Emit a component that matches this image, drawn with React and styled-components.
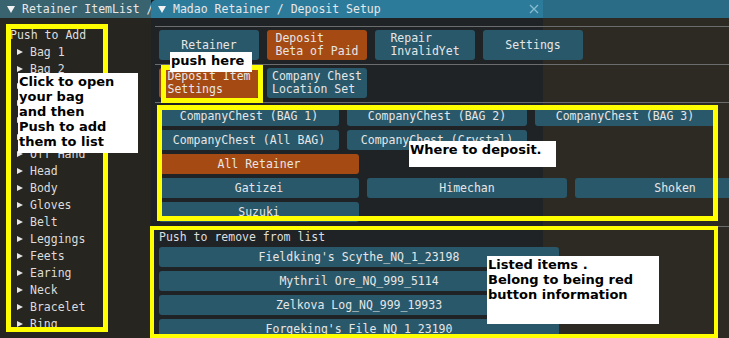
import React from "react";
import styled, { createGlobalStyle } from "styled-components";

const GlobalStyle = createGlobalStyle`
  html, body {
    margin: 0;
    padding: 0;
    background: #1b1c1c;
    overflow: hidden;
  }
`;

const leftItems = [
  "Bag 1",
  "Bag 2",
  "Bag 3",
  "Bag 4",
  "Crystals",
  "Main Hand",
  "Off Hand",
  "Head",
  "Body",
  "Gloves",
  "Belt",
  "Leggings",
  "Feets",
  "Earing",
  "Neck",
  "Bracelet",
  "Ring",
];

const listed = [
  "Fieldking's Scythe_NQ_1_23198",
  "Mythril Ore_NQ_999_5114",
  "Zelkova Log_NQ_999_19933",
  "Forgeking's File_NQ_1_23190",
];

const App = () => {
  return (
    <>
      <GlobalStyle />
      <Screen>
        <LeftWindow>
          <TitleBar $tone="inactive">
            <Collapse />
            <TitleText>Retainer ItemList /</TitleText>
          </TitleBar>
          <LeftBody>
            <Label>Push to Add</Label>
            {leftItems.map((item) => (
              <TreeNode key={item}>
                <Arrow />
                {item}
              </TreeNode>
            ))}
          </LeftBody>
        </LeftWindow>

        <MainWindow>
          <TitleBar $tone="active">
            <Collapse />
            <TitleText>Madao Retainer / Deposit Setup</TitleText>
            <Close viewBox="0 0 10 10">
              <path d="M1 1 L9 9 M9 1 L1 9" />
            </Close>
          </TitleBar>
          <MainBody>
            <Separator />
            <Row>
              <Btn $w={100} $h={30}>Retainer</Btn>
              <Btn $w={100} $h={30} $active>
                {"Deposit\nBeta of Paid"}
              </Btn>
              <Btn $w={100} $h={30}>
                {"Repair\nInvalidYet"}
              </Btn>
              <Btn $w={100} $h={30}>Settings</Btn>
            </Row>
            <Separator />
            <Row>
              <Btn $w={100} $h={30} $active>
                {"Deposit Item\nSettings"}
              </Btn>
              <Btn $w={100} $h={30}>
                {"Company Chest\nLocation Set"}
              </Btn>
            </Row>
            <Separator />
            <Row>
              <Btn $w={180}>CompanyChest (BAG 1)</Btn>
              <Btn $w={180}>CompanyChest (BAG 2)</Btn>
              <Btn $w={180}>CompanyChest (BAG 3)</Btn>
            </Row>
            <Row>
              <Btn $w={180}>CompanyChest (All BAG)</Btn>
              <Btn $w={180}>CompanyChest (Crystal)</Btn>
            </Row>
            <Row>
              <Btn $w={200} $active>
                All Retainer
              </Btn>
            </Row>
            <Row>
              <Btn $w={200}>Gatizei</Btn>
              <Btn $w={200}>Himechan</Btn>
              <Btn $w={200}>Shoken</Btn>
            </Row>
            <Row>
              <Btn $w={200}>Suzuki</Btn>
            </Row>
            <Separator />
            <Label>Push to remove from list</Label>
            {listed.map((item) => (
              <Btn key={item} $w={400}>
                {item}
              </Btn>
            ))}
          </MainBody>
        </MainWindow>

        {/* annotation overlays */}
        <Frame $x={6} $y={24} $w={102} $h={308} />
        <Frame $x={161} $y={65} $w={102} $h={38} />
        <Frame $x={157} $y={105} $w={561} $h={116} />
        <Frame $x={150} $y={226} $w={568} $h={112} $b={4} />

        <Note $x={18} $y={73} $w={120} $h={80}>
          Click to open
          <br />
          your bag
          <br />
          and then
          <br />
          Push to add
          <br />
          them to list
        </Note>
        <Note $x={170} $y={52} $w={82} $h={20}>
          push here
        </Note>
        <Note $x={409} $y={141} $w={147} $h={26}>
          Where to deposit.
        </Note>
        <Note $x={487} $y={256} $w={172} $h={68}>
          Listed items .
          <br />
          Belong to being red
          <br />
          button information
        </Note>
      </Screen>
    </>
  );
};
export default App;

const Screen = styled.div`
  position: relative;
  width: 729px;
  height: 338px;
  overflow: hidden;
  display: flex;
  font-family: "DejaVu Sans Mono", "Liberation Mono", monospace;
`;

const LeftWindow = styled.div`
  width: 151px;
  flex: none;
  display: flex;
  flex-direction: column;
  background: #27251f;
`;

const MainWindow = styled.div`
  width: 620px;
  flex: none;
  display: flex;
  flex-direction: column;
  background: linear-gradient(90deg, #1f2326 0, #1f2326 392px, #2d2a24 392px);
  border-top-left-radius: 5px;
  overflow: hidden;
`;

const TitleBar = styled.div`
  position: relative;
  height: 18px;
  flex: none;
  display: flex;
  align-items: center;
  padding-left: 7px;
  background: ${(p) =>
    p.$tone === "active"
      ? "linear-gradient(90deg, #2c7b9b 0, #2c7b9b 392px, #2a6c85 392px)"
      : "#39636f"};
  color: #e8e8e8;
  white-space: nowrap;
  overflow: hidden;
`;

const Collapse = styled.span`
  width: 0;
  height: 0;
  border-left: 4px solid transparent;
  border-right: 4px solid transparent;
  border-top: 7px solid #f2f2f2;
  margin-right: 7px;
  flex: none;
`;

const TitleText = styled.span`
  font-size: 11.5px;
  line-height: 13px;
`;

const Close = styled.svg`
  position: absolute;
  left: 378px;
  top: 4px;
  width: 10px;
  height: 10px;
  stroke: #86bccf;
  stroke-width: 1.3;
  fill: none;
`;

const LeftBody = styled.div`
  display: flex;
  flex-direction: column;
  gap: 4px;
  padding: 10px 0 0 10px;
`;

const Label = styled.div`
  height: 14px;
  font-size: 11.5px;
  line-height: 14px;
  color: #dedede;
  white-space: nowrap;
  margin-bottom: -1px;
`;

const TreeNode = styled.div`
  display: flex;
  align-items: center;
  height: 13px;
  font-size: 11.5px;
  color: #dcdcdc;
  padding-left: 7px;
  white-space: nowrap;
`;

const Arrow = styled.span`
  width: 0;
  height: 0;
  border-top: 3.5px solid transparent;
  border-bottom: 3.5px solid transparent;
  border-left: 6px solid #e6e6e6;
  margin-right: 7px;
`;

const MainBody = styled.div`
  display: flex;
  flex-direction: column;
  gap: 4px;
  padding: 8px 8px 0 8px;
`;

const Separator = styled.div`
  height: 0;
  border-top: 1px solid #6a6c6e;
  margin: 0 -4px -1px -4px;
`;

const Row = styled.div`
  display: flex;
  gap: 8px;
`;

const Btn = styled.button`
  width: ${(p) => p.$w}px;
  height: ${(p) => p.$h || 20}px;
  flex: none;
  padding: 0;
  border: 0;
  border-radius: 3px;
  background: ${(p) => (p.$active ? "#a64a14" : "#29586a")};
  color: #e6e6e6;
  font-family: "DejaVu Sans Mono", "Liberation Mono", monospace;
  font-size: 11.5px;
  line-height: 13px;
  display: flex;
  align-items: center;
  justify-content: center;
  white-space: pre;
  text-align: left;
`;

const Frame = styled.div`
  position: absolute;
  left: ${(p) => p.$x}px;
  top: ${(p) => p.$y}px;
  width: ${(p) => p.$w}px;
  height: ${(p) => p.$h}px;
  box-sizing: border-box;
  border: ${(p) => p.$b || 5}px solid #ffff00;
  pointer-events: none;
`;

const Note = styled.div`
  position: absolute;
  left: ${(p) => p.$x}px;
  top: ${(p) => p.$y}px;
  width: ${(p) => p.$w}px;
  height: ${(p) => p.$h}px;
  box-sizing: border-box;
  background: #ffffff;
  color: #000000;
  font-family: "DejaVu Sans", "Liberation Sans", sans-serif;
  font-weight: bold;
  font-size: 13px;
  line-height: 15px;
  padding: 1px 0 0 1px;
  white-space: nowrap;
`;
